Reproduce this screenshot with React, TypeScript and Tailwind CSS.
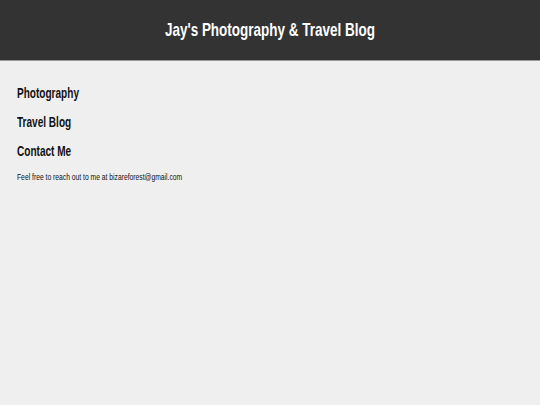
export default function App() {
  return (
    <div className="min-h-[405px] bg-[#efefef] font-['Liberation_Sans',Arial,sans-serif] text-[#111]">
      <header className="flex h-[61px] items-center justify-center border-b border-[#9a9a9a] bg-[#333333]">
        <h1 className="origin-center scale-x-[0.71] text-[19px] font-bold whitespace-nowrap text-white">
          Jay's Photography &amp; Travel Blog
        </h1>
      </header>
      <main className="flex flex-col items-start px-[17px] pt-[22px]">
        <h2 className="origin-left scale-x-[0.67] text-[15px] font-bold leading-[20px] whitespace-nowrap">Photography</h2>
        <h2 className="mt-[9px] origin-left scale-x-[0.67] text-[15px] font-bold leading-[20px] whitespace-nowrap">Travel Blog</h2>
        <h2 className="mt-[9px] origin-left scale-x-[0.67] text-[15px] font-bold leading-[20px] whitespace-nowrap">Contact Me</h2>
        <p className="mt-[10px] origin-left scale-x-[0.75] text-[9px] leading-[12px] whitespace-nowrap">
          Feel free to reach out to me at bizareforest@gmail.com
        </p>
      </main>
    </div>
  );
}
